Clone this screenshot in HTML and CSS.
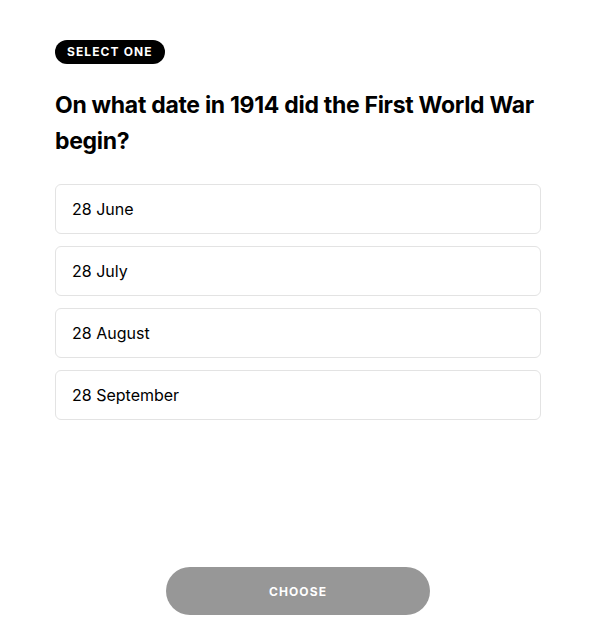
FILE: index.html
```html
<!DOCTYPE html>
<html>
  <head>
    <title>Quiz</title>
    <meta name="viewport" content="width=device-width,initial-scale=1">
    <link rel="stylesheet" href="styles.css">
  </head>
  <body>
    <div class="quiz">
      <span class="badge">Select one</span>
      <h1 class="question">On what date in 1914 did the First World War begin?</h1>

      <div class="options">
        <div class="option">28 June</div>
        <div class="option">28 July</div>
        <div class="option">28 August</div>
        <div class="option">28 September</div>
      </div>

      <div class="actions">
        <button class="choose" disabled>Choose</button>
      </div>
    </div>
  </body>
</html>
```

FILE: styles.css
```css
* {
  box-sizing: border-box;
  margin: 0;
  padding: 0;
}

body {
  font-family: Inter, "Noto Sans", sans-serif;
  background-color: #fff;
  color: #000;
}

.quiz {
  min-height: 100vh;
  width: 486px;
  margin-left: 55px;
  padding: 40px 0 28px;
  display: flex;
  flex-direction: column;
  align-items: flex-start;
}

.badge {
  display: inline-block;
  background-color: #000;
  color: #fff;
  font-size: 12px;
  font-weight: 700;
  letter-spacing: 1.1px;
  text-transform: uppercase;
  line-height: 24px;
  height: 24px;
  padding: 0 12px;
  border-radius: 12px;
}

.question {
  margin-top: 23px;
  font-size: 23px;
  font-weight: 700;
  line-height: 36px;
  letter-spacing: -0.3px;
}

.options {
  width: 100%;
  margin-top: 25px;
  display: flex;
  flex-direction: column;
  gap: 12px;
}

.option {
  height: 50px;
  display: flex;
  align-items: center;
  padding: 0 16px;
  border: 1px solid #e3e3e3;
  border-radius: 6px;
  font-size: 16px;
}

.actions {
  width: 100%;
  margin-top: auto;
  display: flex;
  justify-content: center;
}

.choose {
  width: 264px;
  height: 48px;
  border: none;
  border-radius: 24px;
  background-color: #979797;
  color: #fff;
  font-family: inherit;
  font-size: 12px;
  font-weight: 700;
  letter-spacing: 1.1px;
  text-transform: uppercase;
}
```
